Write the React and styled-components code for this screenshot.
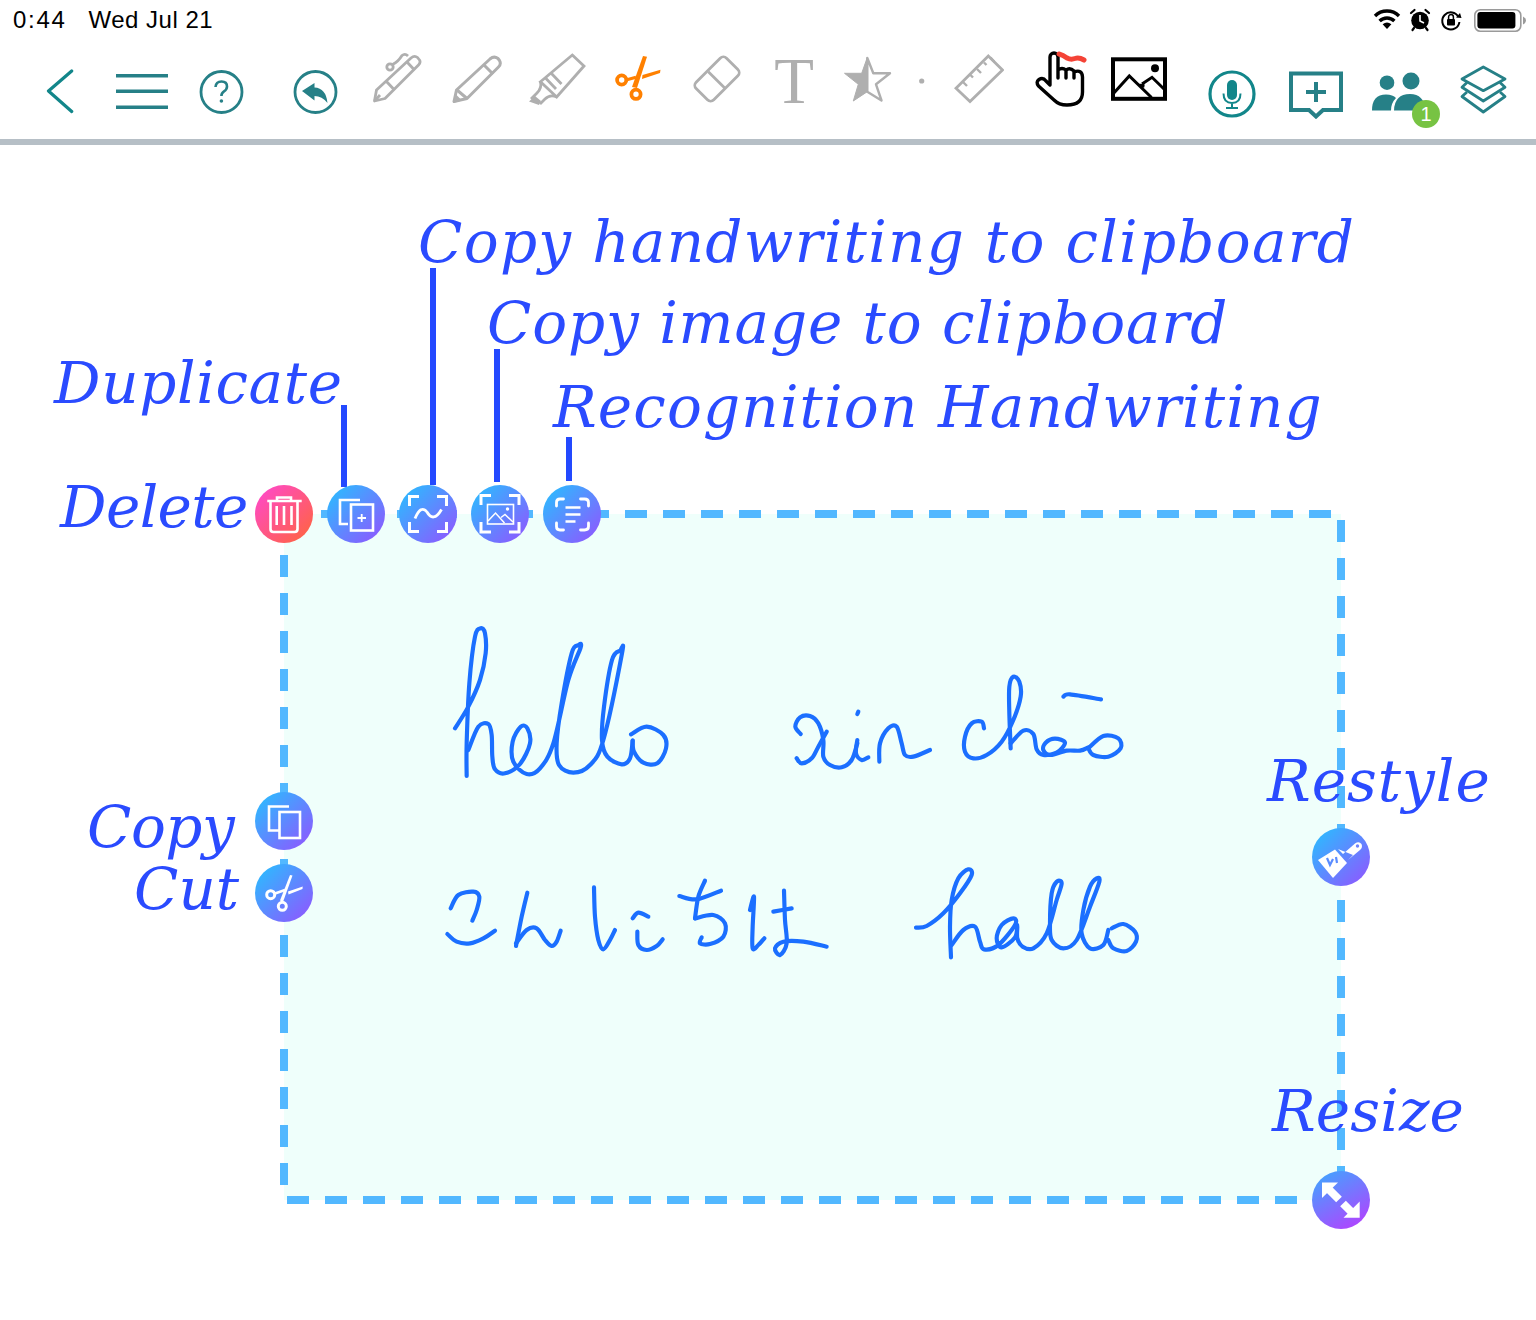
import styled, { createGlobalStyle } from "styled-components";

const GlobalStyle = createGlobalStyle`
  html, body {
    margin: 0;
    padding: 0;
    background: #fff;
    font-family: "Liberation Sans", Arial, sans-serif;
  }
`;

const GRAY = "#afafaf";
const TEAL = "#268087";
const DASH = "#52b8ff";

const Page = styled.div`
  width: 1536px;
  height: 1320px;
  overflow: hidden;
  display: flex;
  flex-direction: column;
`;

const StatusBar = styled.div`
  height: 40px;
  flex: none;
  display: flex;
  align-items: flex-start;
  justify-content: space-between;
`;

const StatusText = styled.div`
  display: flex;
  gap: 22px;
  padding: 6px 0 0 13px;
  font-size: 24px;
  line-height: 28px;
  color: #000;
`;

const Time = styled.span`
  letter-spacing: 1.7px;
`;

const DateText = styled.span`
  letter-spacing: 0.5px;
`;

const StatusIcons = styled.div`
  display: flex;
  padding-right: 9px;
`;

const Toolbar = styled.div`
  height: 99px;
  flex: none;
  display: flex;
  align-items: flex-start;
`;

const Divider = styled.div`
  height: 6px;
  flex: none;
  background: #b6bfc6;
`;

const IconSvg = styled.svg`
  display: block;
  flex: none;
  margin-left: ${(p) => p.$gap}px;
  margin-top: ${(p) => p.$top}px;
`;

// viewBox is in page pixels, so the paths read like the screenshot
function Icon({ x, y, w, h, gap, base = 40, children }) {
  return (
    <IconSvg $gap={gap} $top={y - base} width={w} height={h} viewBox={`${x} ${y} ${w} ${h}`} fill="none">
      {children}
    </IconSvg>
  );
}

const PeopleWrap = styled.div`
  position: relative;
  flex: none;
  margin-left: 28px;
  margin-top: 31px;
  width: 55px;
  height: 41px;
`;

const Badge = styled.div`
  position: absolute;
  left: 41px;
  top: 29px;
  width: 28px;
  height: 28px;
  border-radius: 50%;
  background: #77c343;
  color: #fff;
  font-size: 20px;
  line-height: 28px;
  text-align: center;
`;

const Canvas = styled.div`
  position: relative;
  flex: 1;
`;

const Selection = styled.div`
  position: absolute;
  left: 280px;
  top: 365px;
  width: 1065px;
  height: 694px;
  background:
    repeating-linear-gradient(90deg, transparent 0 3px, ${DASH} 3px 25px, transparent 25px 38px) top / 100% 8px no-repeat,
    repeating-linear-gradient(90deg, transparent 0 7px, ${DASH} 7px 29px, transparent 29px 38px) bottom / 100% 8px no-repeat,
    repeating-linear-gradient(180deg, transparent 0 7px, ${DASH} 7px 29px, transparent 29px 38px) left top / 8px calc(100% - 10px) no-repeat,
    repeating-linear-gradient(180deg, transparent 0 10px, ${DASH} 10px 32px, transparent 32px 38px) right / 8px 100% no-repeat,
    linear-gradient(#effffb, #effffb) 4px 4px / calc(100% - 8px) calc(100% - 8px) no-repeat;
`;

const InkSvg = styled.svg`
  position: absolute;
  left: ${(p) => p.$x - 280}px;
  top: ${(p) => p.$y - 510}px;
`;

const Label = styled.div`
  position: absolute;
  left: ${(p) => p.$x}px;
  top: ${(p) => p.$base - 145 - 49}px;
  font-family: "DejaVu Serif", serif;
  font-style: italic;
  font-size: 58px;
  line-height: 58px;
  letter-spacing: ${(p) => p.$track || 0}px;
  white-space: nowrap;
  color: #2a4bff;
`;

const Leader = styled.div`
  position: absolute;
  left: ${(p) => p.$x}px;
  top: ${(p) => p.$y - 145}px;
  width: 6px;
  height: ${(p) => p.$h}px;
  background: #2349ff;
`;

const gradients = {
  blue: "linear-gradient(135deg, #2fb8ff 10%, #8a5cff 90%)",
  pink: "linear-gradient(135deg, #ff4ac4 10%, #ff6347 90%)",
  violet: "linear-gradient(150deg, #3fa6ff 5%, #b044ff 90%)",
};

const RoundButton = styled.div`
  position: absolute;
  left: ${(p) => p.$x - 29}px;
  top: ${(p) => p.$y - 145 - 29}px;
  width: 58px;
  height: 58px;
  border-radius: 50%;
  background: ${(p) => gradients[p.$tone || "blue"]};
`;

const Glyph = styled.svg`
  display: block;
`;

function Round({ x, y, tone, children }) {
  return (
    <RoundButton $x={x} $y={y} $tone={tone}>
      <Glyph width="58" height="58" viewBox="0 0 58 58" fill="none" stroke="#fff" strokeWidth="2.6">
        {children}
      </Glyph>
    </RoundButton>
  );
}

// catmull-rom through the traced points
function smooth(pts) {
  let d = `M${pts[0][0]} ${pts[0][1]}`;
  for (let i = 0; i < pts.length - 1; i++) {
    const p0 = pts[i - 1] || pts[i];
    const p1 = pts[i];
    const p2 = pts[i + 1];
    const p3 = pts[i + 2] || p2;
    d += ` C${p1[0] + (p2[0] - p0[0]) / 6} ${p1[1] + (p2[1] - p0[1]) / 6} ${p2[0] - (p3[0] - p1[0]) / 6} ${p2[1] - (p3[1] - p1[1]) / 6} ${p2[0]} ${p2[1]}`;
  }
  return d;
}

function Ink({ x, y, w, h, strokes }) {
  return (
    <InkSvg $x={x} $y={y} width={w} height={h} viewBox={`0 0 ${w * 3} ${h * 3}`} fill="none" stroke="#1b6fff" strokeWidth="12.5" strokeLinecap="round" strokeLinejoin="round">
      {strokes.map((s, i) => (
        <path key={i} d={smooth(s)} />
      ))}
    </InkSvg>
  );
}

const hello = [
  [[75,355],[115,290],[150,210],[167,130],[165,70],[152,55],[135,80],[118,220],[110,400],[110,498]],
  [[115,420],[145,350],[175,342],[185,375],[187,440],[195,478],[225,490],[270,462],[300,400],[292,355],[272,350],[248,395],[250,455],[290,492],[330,475],[370,400],[415,210],[452,112],[444,106],[425,130],[395,280],[380,400],[387,465],[430,488],[480,465],[520,390],[576,130],[570,122],[546,150],[522,290],[516,390],[532,440],[575,463],[600,445],[608,392]],
  [[603,373],[650,350],[700,375],[708,415],[682,460],[640,458],[612,425],[608,392]],
];

const xinChao = [
  [[62,222],[46,200],[60,172],[90,168],[115,190],[130,240],[130,290],[150,315],[185,322],[215,300],[232,250]],
  [[50,295],[65,310],[95,295],[115,260],[140,215]],
  [[235,155],[232,162]],
  [[232,240],[228,280],[245,300],[265,292]],
  [[298,305],[300,250],[325,205],[350,200],[365,250],[375,285],[400,290],[450,270]],
  [[612,205],[605,185],[575,190],[555,230],[555,275],[580,295],[620,285],[665,245],[700,180],[722,110],[718,65],[700,50],[688,80],[688,160],[692,265]],
  [[692,250],[730,212],[760,222],[770,268],[790,285],[830,278],[855,248],[825,236],[797,248],[790,270],[812,285],[860,272],[900,272],[925,262]],
  [[925,265],[970,228],[1015,235],[1022,265],[985,290],[940,285],[925,265]],
  [[850,110],[870,103],[963,118]],
];

const konnichiwa = [
  [[62,145],[85,105],[130,95],[148,110],[140,150],[127,182]],
  [[52,222],[80,245],[120,250],[160,235],[195,212]],
  [[292,98],[275,170],[258,258]],
  [[258,250],[290,210],[320,205],[345,240],[365,258],[380,245],[392,212]],
  [[492,82],[495,170],[505,240],[520,268],[540,240],[555,210]],
  [[608,175],[625,158],[655,170]],
  [[622,215],[625,255],[650,270],[680,258],[698,238]],
  [[748,108],[800,118],[873,92]],
  [[825,62],[805,110],[795,175]],
  [[795,175],[850,165],[885,190],[880,230],[840,252],[810,250],[815,232]],
  [[960,150],[972,110],[968,200],[968,265],[985,255],[1003,235]],
  [[1030,155],[1085,145]],
  [[1062,92],[1065,180],[1070,250],[1050,285],[1035,265],[1060,245],[1120,245],[1190,260]],
];

const hallo = [
  [[48,233],[80,228],[130,190],[180,130],[215,75],[205,58],[175,85],[155,150],[150,230],[153,322]],
  [[155,285],[190,240],[225,230],[240,275],[252,298],[295,285],[345,225],[340,205],[305,225],[290,265],[305,292],[345,262],[352,225],[352,265],[368,290],[400,295],[440,250],[470,150],[485,100],[470,95],[455,130],[450,220],[455,270],[490,295],[530,270],[570,170],[598,95],[590,85],[570,110],[550,180],[545,250],[570,295],[610,285],[625,240]],
  [[635,235],[670,222],[705,245],[708,275],[680,303],[640,295],[625,270]],
];

export default function App() {
  return (
    <Page>
      <GlobalStyle />
      <StatusBar>
        <StatusText>
          <Time>0:44</Time>
          <DateText>Wed Jul 21</DateText>
        </StatusText>
        <StatusIcons>
          <Icon x={1372} y={8} w={30} h={24} gap={0} base={0}>
            <path d="M1375 16A17 17 0 0 1 1399 16" stroke="#000" strokeWidth="3.4" />
            <path d="M1379.6 21A10.5 10.5 0 0 1 1394.4 21" stroke="#000" strokeWidth="3.4" />
            <path d="M1387 29L1382.6 24.2Q1387 20.8 1391.4 24.2Z" fill="#000" />
          </Icon>
          <Icon x={1409} y={8} w={22} h={24} gap={7} base={0}>
            <circle cx="1420" cy="20.5" r="8.8" fill="#000" />
            <path d="M1420 15V21L1424 23" stroke="#fff" strokeWidth="1.6" />
            <path d="M1411 13L1414.5 10M1429 13L1425.5 10M1414 28L1412.5 30M1426 28L1427.5 30" stroke="#000" strokeWidth="2.2" strokeLinecap="round" />
          </Icon>
          <Icon x={1440} y={8} w={23} h={24} gap={9} base={0}>
            <path d="M1458.5 17A8.6 8.6 0 1 0 1459.4 22" stroke="#000" strokeWidth="2" />
            <path d="M1456 17.5L1461.5 18L1460 13Z" fill="#000" />
            <rect x="1447" y="19" width="8" height="6.5" rx="1" fill="#000" />
            <path d="M1448.6 19V17A2.4 2.4 0 0 1 1453.4 17V19" stroke="#000" strokeWidth="1.5" />
          </Icon>
          <Icon x={1474} y={8} w={53} h={24} gap={11} base={0}>
            <rect x="1474.8" y="9.8" width="46" height="21.4" rx="5.5" stroke="#9a9a9a" strokeWidth="1.6" />
            <rect x="1477.4" y="12" width="38" height="16.6" rx="3" fill="#000" />
            <path d="M1523 16.5Q1526 18 1526 20.5Q1526 23 1523 24.5Z" fill="#9a9a9a" />
          </Icon>
        </StatusIcons>
      </StatusBar>

      <Toolbar>
        <Icon x={46} y={69} w={29} h={45} gap={46}>
          <path d="M71.7 71L48.5 91L71.7 111.5" stroke="#12868a" strokeWidth="3.2" strokeLinecap="round" strokeLinejoin="round" />
        </Icon>
        <Icon x={116} y={73} w={52} h={36} gap={41}>
          <path d="M116 75.7H168M116 91.3H168M116 107.3H168" stroke={TEAL} strokeWidth="3.6" />
        </Icon>
        <Icon x={199} y={70} w={45} h={44} gap={31}>
          <circle cx="221.5" cy="92" r="20.5" stroke={TEAL} strokeWidth="2.8" />
          <path d="M215.5 87Q216 81.5 221.5 81.5Q227 81.5 227 86.5Q227 89.5 224 91.3Q221.4 93 221.4 96" stroke={TEAL} strokeWidth="2.6" />
          <circle cx="221.4" cy="101" r="1.8" fill={TEAL} />
        </Icon>
        <Icon x={293} y={70} w={45} h={44} gap={49}>
          <circle cx="315.5" cy="92" r="20.5" stroke={TEAL} strokeWidth="2.8" />
          <path d="M302 91L314.5 83V87.5Q326 88 327.5 103Q322 96 314.5 96V100.5Z" fill={TEAL} />
        </Icon>
        <Icon x={372} y={52} w={50} h={52} gap={34}>
          <g stroke={GRAY} strokeWidth="2.8" strokeLinejoin="round">
            <path d="M374.5 101L376.5 90L411 58Q414.5 55 417.5 57.5L419.5 60Q421 62.5 418.5 65L385 98.5Z" />
            <path d="M386 81L394.5 90M407 62L414.5 70M374.5 101L380 95" />
            <circle cx="390" cy="67" r="3.2" />
            <path d="M392.5 64.5Q398 62 402 55.5Q405 53 408 56" />
          </g>
        </Icon>
        <Icon x={451} y={54} w={51} h={51} gap={29}>
          <g stroke={GRAY} strokeWidth="3" strokeLinejoin="round">
            <path d="M454 101.5L456.5 90L490 59Q494 55.5 498 58.5L499.5 60.5Q501.5 64 498.5 67L467 98.5Z" />
            <path d="M484 65L493 74M457 90L467 98.5" />
          </g>
          <path d="M453 103L455.5 94L462 100.5Z" fill={GRAY} />
        </Icon>
        <Icon x={528} y={52} w={58} h={54} gap={26}>
          <g stroke={GRAY} strokeWidth="2.8" strokeLinejoin="miter">
            <path d="M572.3 55L584 66L556.7 97L540.5 81.7Z" />
            <path d="M551 73L561.5 84M545.5 78L556 89" />
            <path d="M540.5 81.7Q542 88 537 93L531 99M556.7 97Q550 94 545 99L540 104" />
          </g>
          <path d="M529 101.5L535 96L541 101L539 105Z" fill={GRAY} />
        </Icon>
        <Icon x={614} y={54} w={48} h={48} gap={28}>
          <circle cx="621.7" cy="80" r="4.6" stroke="#ff8000" strokeWidth="3.8" />
          <circle cx="636" cy="94.3" r="4.6" stroke="#ff8000" strokeWidth="3.8" />
          <path d="M643 56L647 56.8L637 88L632 87Z" fill="#ff8000" />
          <path d="M626 80L636 77.3" stroke="#ff8000" strokeWidth="3" />
          <path d="M642.5 75L660.5 69.7L660 73L642 79Z" fill="#ff8000" />
        </Icon>
        <Icon x={692} y={54} w={50} h={50} gap={30}>
          <g stroke={GRAY} strokeWidth="2.8">
            <rect x="695.5" y="66.5" width="43" height="25" rx="4.5" transform="rotate(-45 717 79)" />
            <path d="M708.3 71.7L725 88.3" />
          </g>
        </Icon>
        <Icon x={770} y={40} w={48} h={85} gap={28}>
          <text x="794" y="103" textAnchor="middle" fontFamily="Liberation Serif, serif" fontSize="65" fill={GRAY}>T</text>
        </Icon>
        <Icon x={843} y={56} w={49} h={47} gap={25}>
          <path d="M867.3 58L873.3 73.3H890L876 84.3L881.5 100.5L867.3 91.7Z" stroke={GRAY} strokeWidth="2.4" strokeLinejoin="round" />
          <path d="M867.3 57.5L861.7 73.3H844.5L858.3 84.3L853.3 101L867.3 91.7Z" fill={GRAY} stroke={GRAY} strokeWidth="1" strokeLinejoin="round" />
        </Icon>
        <Icon x={917} y={77} w={9} h={9} gap={25}>
          <circle cx="921.7" cy="81" r="2.6" fill={GRAY} />
        </Icon>
        <Icon x={954} y={54} w={50} h={50} gap={28}>
          <g stroke={GRAY} strokeWidth="2.8">
            <path d="M988.3 56L1002.5 70L970 101.5L956 88.3Z" />
            <path d="M963 82L967 86M970.5 75L973 77.5M977 69L981 73M984 62.5L986.5 65M990.5 57.5L994.5 62" strokeWidth="2.4" />
          </g>
        </Icon>
        <Icon x={1034} y={50} w={53} h={58} gap={30}>
          <path d="M1050 85V57A4 4 0 0 1 1058 57V78M1058 70Q1062 67 1066 70V78M1066 70Q1070 67 1074 71V78M1074 72Q1082 69 1082.5 77V92Q1082.5 105 1067 105Q1059 105 1054 100L1038.5 86Q1035.5 82 1039 79.5Q1043 77 1046 81L1050 85" stroke="#000" strokeWidth="3.4" strokeLinecap="round" strokeLinejoin="round" />
          <path d="M1059 54Q1063 55 1067 58Q1071 60 1075 58.5Q1079 57 1084 60" stroke="#f44336" strokeWidth="5" strokeLinecap="round" />
        </Icon>
        <Icon x={1110} y={56} w={58} h={46} gap={23}>
          <rect x="1113" y="59.3" width="52" height="39.5" stroke="#000" strokeWidth="4" />
          <path d="M1113 94L1129.3 76L1151.5 97.5M1138.5 85L1144.5 86M1142 84L1152 77.3L1165 90" stroke="#000" strokeWidth="3" />
          <circle cx="1155" cy="68.3" r="4" fill="#000" />
        </Icon>
        <Icon x={1208} y={70} w={48} h={48} gap={40}>
          <circle cx="1232" cy="94" r="22" stroke="#12868a" strokeWidth="3.2" />
          <rect x="1227" y="80" width="10" height="20" rx="5" fill="#12868a" />
          <path d="M1223.5 93.5Q1223.5 103 1232 103Q1240.5 103 1240.5 93.5M1232 103V108M1226 108H1238" stroke="#12868a" strokeWidth="2" />
        </Icon>
        <Icon x={1289} y={71} w={54} h={48} gap={33}>
          <path d="M1291 73.5H1341V110H1323L1316 116.5L1309 110H1291Z" stroke={TEAL} strokeWidth="4" />
          <path d="M1306 92H1326M1316 82V102" stroke={TEAL} strokeWidth="4" />
        </Icon>
        <PeopleWrap>
          <Glyph width="55" height="41" viewBox="1371 71 55 41">
            <circle cx="1387" cy="82.7" r="7.3" fill={TEAL} />
            <circle cx="1411" cy="81" r="8.5" fill={TEAL} />
            <path d="M1372 110.5Q1372 94.5 1386 94.5Q1393 94.5 1396 98Q1391 103 1391 110.5Z" fill={TEAL} />
            <path d="M1394 110.5Q1394.5 94 1410 94Q1424 94 1426 110.5Z" fill={TEAL} />
          </Glyph>
          <Badge>1</Badge>
        </PeopleWrap>
        <Icon x={1460} y={65} w={47} h={49} gap={34}>
          <g stroke={TEAL} strokeWidth="2.8" strokeLinejoin="round">
            <path d="M1483.3 67L1505 79L1483.3 90.7L1462 79Z" />
            <path d="M1467 82.5L1462 87.3L1483.3 101L1505 87.3L1500 82.5" />
            <path d="M1467 92L1462 96.5L1483.3 112L1505 96.5L1500 92" />
          </g>
        </Icon>
      </Toolbar>
      <Divider />

      <Canvas>
        <Selection>
          <Ink x={430} y={610} w={360} h={180} strokes={hello} />
          <Ink x={780} y={660} w={360} h={120} strokes={xinChao} />
          <Ink x={430} y={860} w={420} h={110} strokes={konnichiwa} />
          <Ink x={900} y={850} w={260} h={120} strokes={hallo} />
        </Selection>

        <Leader $x={341} $y={405} $h={82} />
        <Leader $x={430} $y={268} $h={217} />
        <Leader $x={494} $y={349} $h={133} />
        <Leader $x={566} $y={437} $h={44} />

        <Label $x={54} $base={403} $track={0.67}>Duplicate</Label>
        <Label $x={418} $base={262} $track={1.3}>Copy handwriting to clipboard</Label>
        <Label $x={487} $base={343} $track={0.9}>Copy image to clipboard</Label>
        <Label $x={553} $base={427} $track={1.17}>Recognition Handwriting</Label>
        <Label $x={60} $base={527} $track={-0.6}>Delete</Label>
        <Label $x={87} $base={847} $track={-0.5}>Copy</Label>
        <Label $x={134} $base={909}>Cut</Label>
        <Label $x={1267} $base={801} $track={1}>Restyle</Label>
        <Label $x={1272} $base={1131} $track={0.15}>Resize</Label>

        <Round x={284} y={514} tone="pink">
          <path d="M12.3 16H46.7M22 16V12.5H36V16M15.5 16V44Q15.5 47 18.5 47H39.5Q42.5 47 42.5 44V16M21.7 21V40M29 21V40M36.5 21V40" />
        </Round>
        <Round x={356} y={514}>
          <path d="M33 15H13V39H21" />
          <rect x="24" y="19.5" width="22" height="26" />
          <path d="M30.5 33H39M34.7 29V37" strokeWidth="1.8" />
        </Round>
        <Round x={428} y={514}>
          <path d="M10.5 21V11.5H20M38 11.5H47.5V21M10.5 37V46.5H20M38 46.5H47.5V37" strokeWidth="3" />
          <path d="M16 33.5C20 24 24 22 28 27C32 34 37 34 42.5 24.5" strokeWidth="2.8" />
        </Round>
        <Round x={500} y={514}>
          <path d="M10 20V10.5H20M38 10.5H48V20M10 37V47H20M38 47H48V37" strokeWidth="3" />
          <rect x="16.5" y="19.5" width="26" height="19.5" strokeWidth="1.6" />
          <path d="M17 36L24.5 28L33.5 38M30 32.5L34 29.5L42 37" strokeWidth="1.5" />
          <circle cx="36.5" cy="24" r="1.7" fill="#fff" stroke="none" />
        </Round>
        <Round x={572} y={514}>
          <path d="M13.5 21V17.5Q13.5 14 17 14H20.5M37.5 14H41.5Q45.5 14 45.5 17.5V21M13.5 38V41.5Q13.5 45 17 45H20.5M37.5 45H41.5Q45.5 45 45.5 41.5V38" strokeWidth="2.8" strokeLinecap="round" />
          <path d="M22.5 22.5H37.5M22.5 29.5H37.5M22.5 36.5H32.5" strokeWidth="2.6" />
        </Round>
        <Round x={284} y={821}>
          <path d="M34 14.5H14V38.5H24" />
          <rect x="24.5" y="20" width="20.5" height="26" />
        </Round>
        <Round x={284} y={893}>
          <circle cx="15.7" cy="30.7" r="4" strokeWidth="3" />
          <circle cx="27.3" cy="42.3" r="4" strokeWidth="3" />
          <path d="M35 11L37.5 11.5L28 38L25 36.5Z" fill="#fff" stroke="none" />
          <path d="M20 29.5L30 26" strokeWidth="2.4" />
          <path d="M47.7 22.5L47.5 25L33.5 30.5L33 27.5Z" fill="#fff" stroke="none" />
        </Round>
        <Round x={1341} y={857}>
          <path d="M6 32L23 21.5L35 35L21 50Z" fill="#fff" stroke="none" />
          <path d="M26 21L31 26L43 15.5Q47 13 49.5 16Q51 19.5 48 22L36 32L41 27Z" fill="#fff" stroke="none" />
          <circle cx="45.5" cy="18" r="1.7" fill="#6f84ff" stroke="none" />
          <path d="M15 30L18 37L21 31M24 29L25 35" stroke="#5a8cff" strokeWidth="2.2" />
        </Round>
        <Round x={1341} y={1200} tone="violet">
          <path d="M10 11.5H26L10 27Z" fill="#fff" stroke="none" />
          <path d="M47.7 46.7H31.5L47.7 30.5Z" fill="#fff" stroke="none" />
          <path d="M17 18.5L27 28.5M31 32.5L41 42.5" strokeWidth="8" />
        </Round>
      </Canvas>
    </Page>
  );
}
